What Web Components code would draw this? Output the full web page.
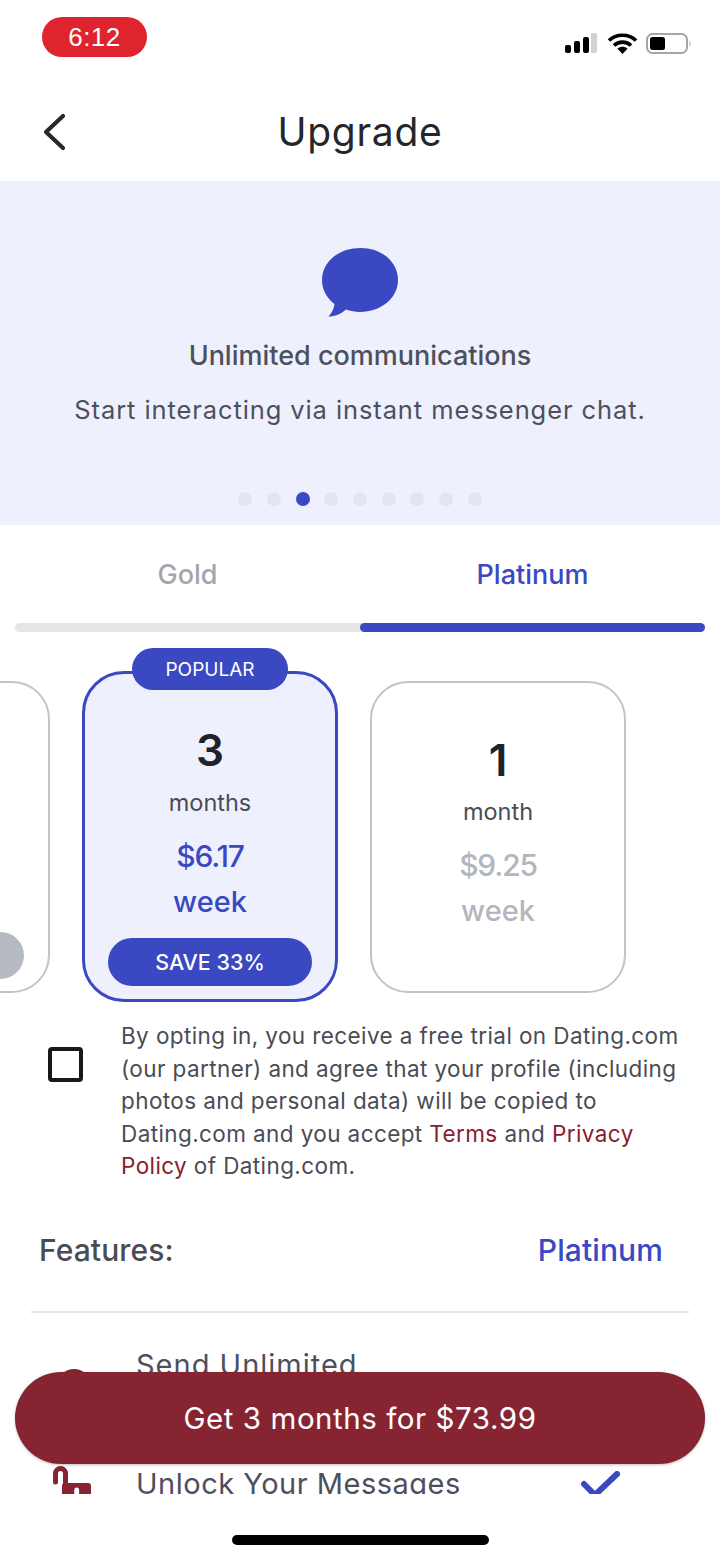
<!DOCTYPE html>
<html>
<head>
<meta charset="utf-8">
<title>Upgrade</title>
<style>
    html, body { margin: 0; padding: 0; background: #fff; }
    body { font-family: "Inter", "Liberation Sans", sans-serif; }
</style>
</head>
<body>
<upgrade-page>
    <status-bar slot="status" time="6:12"></status-bar>
    <app-header slot="header" title="Upgrade"></app-header>

    <promo-banner heading="Unlimited communications" text="Start interacting via instant messenger chat." active="2" count="9"></promo-banner>
    <plan-tabs></plan-tabs>
    <plan-row>
        <plan-card kind="peek"></plan-card>
        <plan-card kind="popular" qty="3" unit="months" price="$6.17" save="SAVE 33%"></plan-card>
        <plan-card qty="1" unit="month" price="$9.25"></plan-card>
    </plan-row>
    <consent-row><span>By opting in, you receive a free trial on Dating.com</span> <span>(our partner) and agree that your profile (including</span> <span>photos and personal data) will be copied to</span> <span>Dating.com and you accept</span> <a>Terms</a> <span>and</span> <a>Privacy</a> <a>Policy</a> <span>of Dating.com.</span></consent-row>
    <features-head></features-head>
    <feature-row icon="dot" tall>Send Unlimited</feature-row>
    <feature-row icon="lock">Unlock Your Messages</feature-row>

    <cta-button slot="cta">Get 3 months for $73.99</cta-button>
</upgrade-page>

<script>
const BLUE = '#3a48c2';

function shadow(el, html) {
    el.attachShadow({mode: 'open'}).innerHTML = html;
}

class UpgradePage extends HTMLElement {
    constructor() {
        super();
        shadow(this, `
<style>
    :host { display: flex; flex-direction: column; position: relative; width: 720px; height: 1560px; overflow: hidden; background: #fff; }
    .scroll { height: 1313px; overflow: hidden; }
    .home { flex: 1; display: flex; justify-content: center; padding-top: 41px; box-sizing: border-box; }
    .home i { display: block; width: 257px; height: 10px; border-radius: 5px; background: #000; }
    .cta { position: absolute; left: 15px; right: 15px; top: 1372px; }
</style>
<slot name="status"></slot>
<slot name="header"></slot>
<div class="scroll"><slot></slot></div>
<div class="home"><i></i></div>
<div class="cta"><slot name="cta"></slot></div>`);
    }
}

class StatusBar extends HTMLElement {
    constructor() {
        super();
        shadow(this, `
<style>
    :host { display: flex; align-items: flex-start; justify-content: space-between; height: 80px; box-sizing: border-box; padding: 17px 28px 0 42px; }
    .time { width: 105px; height: 40px; border-radius: 20px; background: #e0242f; color: #fff; font: 400 26px/40px "Liberation Sans", sans-serif; text-align: center; letter-spacing: .5px; }
    svg { display: block; margin-top: 15px; }
</style>
<div class="time"></div>
<svg width="128" height="24" viewBox="0 0 128 24">
    <rect x="1" y="13" width="6" height="8" rx="2" fill="#000"/>
    <rect x="10" y="9" width="6" height="12" rx="2" fill="#000"/>
    <rect x="19" y="5" width="6" height="16" rx="2" fill="#000"/>
    <rect x="27" y="1" width="6" height="20" rx="1.5" fill="#d2d2d2"/>
    <path d="M45 8.5 C52 1.5 65 1.5 72 8.5" fill="none" stroke="#000" stroke-width="3.6"/>
    <path d="M50 13.5 C54.5 9 62.5 9 67 13.5" fill="none" stroke="#000" stroke-width="3.6"/>
    <path d="M58.5 22 L53.5 16.7 C56.5 14.2 60.5 14.2 63.5 16.7 Z" fill="#000"/>
    <rect x="83" y="2" width="40" height="19" rx="5.5" fill="none" stroke="#a6a6a6" stroke-width="2"/>
    <rect x="86" y="5" width="15" height="13" rx="2.5" fill="#000"/>
    <path d="M125.5 8.5 C127 9.5 127 13.5 125.5 14.5 Z" fill="#a6a6a6"/>
</svg>`);
        this.shadowRoot.querySelector('.time').textContent = this.getAttribute('time');
    }
}

class AppHeader extends HTMLElement {
    constructor() {
        super();
        shadow(this, `
<style>
    :host { display: flex; align-items: center; justify-content: center; position: relative; height: 101px; box-sizing: border-box; }
    svg { position: absolute; left: 42px; top: 33px; }
    h1 { margin: 0 0 -3px; font: 400 39px/50px "Inter", sans-serif; color: #24262b; letter-spacing: .7px; }
</style>
<svg width="26" height="38" viewBox="0 0 26 38"><path d="M21 3 L4 19 L21 35" fill="none" stroke="#26282c" stroke-width="4.2" stroke-linecap="round" stroke-linejoin="round"/></svg>
<h1></h1>`);
        this.shadowRoot.querySelector('h1').textContent = this.getAttribute('title');
    }
}

class PromoBanner extends HTMLElement {
    constructor() {
        super();
        shadow(this, `
<style>
    :host { display: flex; flex-direction: column; align-items: center; height: 344px; box-sizing: border-box; padding-top: 67px; background: #eef1fd; color: #4d505c; }
    svg { display: block; }
    h2 { margin: 21px 0 0; font: 500 27px/36px "Inter", sans-serif; }
    p { margin: 18px 0 0; font: 400 25.5px/36px "Inter", sans-serif; letter-spacing: .9px; }
    .dots { display: flex; gap: 14.7px; margin-top: 64px; }
    .dots i { display: block; width: 14px; height: 14px; border-radius: 50%; background: #e3e5ee; }
    .dots i.on { background: ${BLUE}; }
</style>
<svg width="78" height="69" viewBox="0 0 78 69"><path d="M39.5 0 C61 0 77 14 77 32 C77 50 60 64 39 64 C34 64 29.5 63 25 61.5 C20 66 14 68.5 7.5 68.5 C11 64.5 13 60.5 13.5 56 C5.5 50 1 41.5 1 32 C1 14 17.5 0 39.5 0 Z" fill="${BLUE}"/></svg>
<h2></h2>
<p></p>
<div class="dots"></div>`);
        const root = this.shadowRoot;
        root.querySelector('h2').textContent = this.getAttribute('heading');
        root.querySelector('p').textContent = this.getAttribute('text');
        const count = Number(this.getAttribute('count'));
        const active = Number(this.getAttribute('active'));
        for (let i = 0; i < count; i++) {
            const dot = document.createElement('i');
            if (i === active) dot.className = 'on';
            root.querySelector('.dots').appendChild(dot);
        }
    }
}

class PlanTabs extends HTMLElement {
    constructor() {
        super();
        shadow(this, `
<style>
    :host { display: block; padding: 0 15px; }
    .labels { display: grid; grid-template-columns: 1fr 1fr; height: 98px; box-sizing: border-box; padding-top: 2px; align-items: center; text-align: center; font: 500 27px/36px "Inter", sans-serif; color: #a3a6ad; }
    .labels .on { color: ${BLUE}; }
    .bar { display: flex; justify-content: flex-end; height: 9px; border-radius: 5px; background: #e6e6e8; }
    .bar i { display: block; width: 50%; border-radius: 5px; background: ${BLUE}; }
</style>
<div class="labels"><span>Gold</span><span class="on">Platinum</span></div>
<div class="bar"><i></i></div>`);
    }
}

class PlanRow extends HTMLElement {
    constructor() {
        super();
        shadow(this, `
<style>
    :host { display: flex; align-items: center; gap: 32px; margin: 16px 0 0 -206px; padding-top: 23px; width: 1000px; }
</style>
<slot></slot>`);
    }
}

class PlanCard extends HTMLElement {
    constructor() {
        super();
        const kind = this.getAttribute('kind') || 'plain';
        shadow(this, `
<style>
    :host { display: flex; flex-direction: column; align-items: center; position: relative; flex: none; width: 256px; height: 312px; box-sizing: border-box; padding-top: 52px; border: 2px solid #c3c4c6; border-radius: 38px; background: #fff; }
    :host([kind=popular]) { height: 331px; padding-top: 51px; border: 3px solid ${BLUE}; border-radius: 42px; background: #eef1fd; }
    :host([kind=peek]) { padding-top: 249px; }
    .badge { position: absolute; left: 47px; top: -26px; width: 156px; height: 42px; border-radius: 21px; background: ${BLUE}; color: #fff; font: 400 19px/44px "Inter", sans-serif; text-align: center; }
    .qty { font: 600 44px/50px "Inter", sans-serif; color: #20222b; }
    .unit { margin-top: 12px; font: 400 23.5px/30px "Inter", sans-serif; color: #4a4c52; }
    :host([kind=popular]) .unit { margin-top: 13px; }
    .price { margin-top: 20px; font: 500 30px/36px "Inter", sans-serif; color: #b2b6bf; letter-spacing: -1.2px; }
    .per { margin-top: 10px; font: 500 29px/36px "Inter", sans-serif; color: #b2b6bf; }
    :host([kind=popular]) .price, :host([kind=popular]) .per { color: ${BLUE}; }
    .save { flex: none; margin-top: 18px; width: 204px; height: 48px; border-radius: 24px; background: ${BLUE}; color: #fff; font: 500 21.5px/48px "Inter", sans-serif; text-align: center; }
    :host([kind=peek]) .save { margin-top: 0; height: 47px; background: #b5bac3; }
</style>`);
        const root = this.shadowRoot;
        const add = (cls, text) => {
            const div = document.createElement('div');
            div.className = cls;
            div.textContent = text || '';
            root.appendChild(div);
        };
        if (kind === 'peek') {
            add('save');
            return;
        }
        if (kind === 'popular') add('badge', 'POPULAR');
        add('qty', this.getAttribute('qty'));
        add('unit', this.getAttribute('unit'));
        add('price', this.getAttribute('price'));
        add('per', 'week');
        if (this.getAttribute('save')) add('save', this.getAttribute('save'));
    }
}

class ConsentRow extends HTMLElement {
    constructor() {
        super();
        shadow(this, `
<style>
    :host { display: flex; align-items: flex-start; gap: 38px; margin-top: 18px; padding: 0 30px 0 48px; color: #4a4c54; }
    .box { flex: none; width: 35px; height: 35px; margin-top: 27px; box-sizing: border-box; border: 4px solid #17181c; border-radius: 4px; }
    .text { font: 400 22.5px/32.6px "Inter", sans-serif; letter-spacing: .4px; }
    ::slotted(a) { color: #8a1c30; }
</style>
<div class="box"></div>
<div class="text"><slot></slot></div>`);
    }
}

class FeaturesHead extends HTMLElement {
    constructor() {
        super();
        shadow(this, `
<style>
    :host { display: block; margin-top: 47px; padding: 0 31px; }
    .row { display: flex; justify-content: space-between; height: 81px; padding: 0 26px 0 8px; box-sizing: border-box; font: 500 30px/40px "Inter", sans-serif; letter-spacing: .1px; color: #4a4c54; }
    .row b { font-weight: 500; color: ${BLUE}; }
    hr { margin: 0; border: 0; height: 2px; background: #e5e6e8; }
</style>
<div class="row"><span>Features:</span><b>Platinum</b></div>
<hr>`);
    }
}

class FeatureRow extends HTMLElement {
    constructor() {
        super();
        const lock = `<svg width="40" height="44" viewBox="0 0 40 44"><path d="M3.5 16 V7.5 A5 5 0 0 1 13.5 7.5 V19" fill="none" stroke="#862432" stroke-width="5" stroke-linecap="round"/><path d="M10 20 Q10 17 13 17 H36 Q39 17 39 20 V44 H10 Z" fill="#862432"/><path d="M22.3 24 a2.4 2.4 0 1 1 4.8 0 L27.1 30 H22.3 Z" fill="#fff"/></svg>`;
        const dot = `<svg width="40" height="44" viewBox="0 0 40 44"><circle cx="20" cy="20" r="17" fill="#862432"/></svg>`;
        shadow(this, `
<style>
    :host { display: grid; grid-template-columns: 84px 1fr 39px; align-items: start; height: 119px; margin-left: 52px; padding-right: 100px; box-sizing: border-box; }
    :host([tall]) { height: 152px; padding-top: 34px; }
    .text { font: 400 29px/36px "Inter", sans-serif; color: #4d505c; letter-spacing: .5px; margin-top: 1px; }
    :host([tall]) .text { margin-top: 0; letter-spacing: 1px; }
    svg { display: block; }
    .ico { margin-top: 1px; }
    :host([icon=dot]) .ico { margin-top: 19px; margin-left: 2px; }
    .check { margin-top: 6px; }
    :host([tall]) .check { margin-top: 50px; }
</style>
<div class="ico">${this.getAttribute('icon') === 'lock' ? lock : dot}</div>
<div class="text"><slot></slot></div>
<svg class="check" width="39" height="28" viewBox="0 0 39 28"><path d="M3 13 L14 24 L36 3" fill="none" stroke="${BLUE}" stroke-width="6" stroke-linecap="round" stroke-linejoin="round"/></svg>`);
    }
}

class CtaButton extends HTMLElement {
    constructor() {
        super();
        shadow(this, `
<style>
    :host { display: flex; align-items: center; justify-content: center; height: 92px; border-radius: 46px; background: #862432; color: #fff; font: 400 29.5px/40px "Inter", sans-serif; letter-spacing: .55px; box-shadow: 0 1px 3px rgba(0,0,0,.25); }
</style>
<slot></slot>`);
    }
}

customElements.define('upgrade-page', UpgradePage);
customElements.define('status-bar', StatusBar);
customElements.define('app-header', AppHeader);
customElements.define('promo-banner', PromoBanner);
customElements.define('plan-tabs', PlanTabs);
customElements.define('plan-row', PlanRow);
customElements.define('plan-card', PlanCard);
customElements.define('consent-row', ConsentRow);
customElements.define('features-head', FeaturesHead);
customElements.define('feature-row', FeatureRow);
customElements.define('cta-button', CtaButton);
</script>
</body>
</html>
